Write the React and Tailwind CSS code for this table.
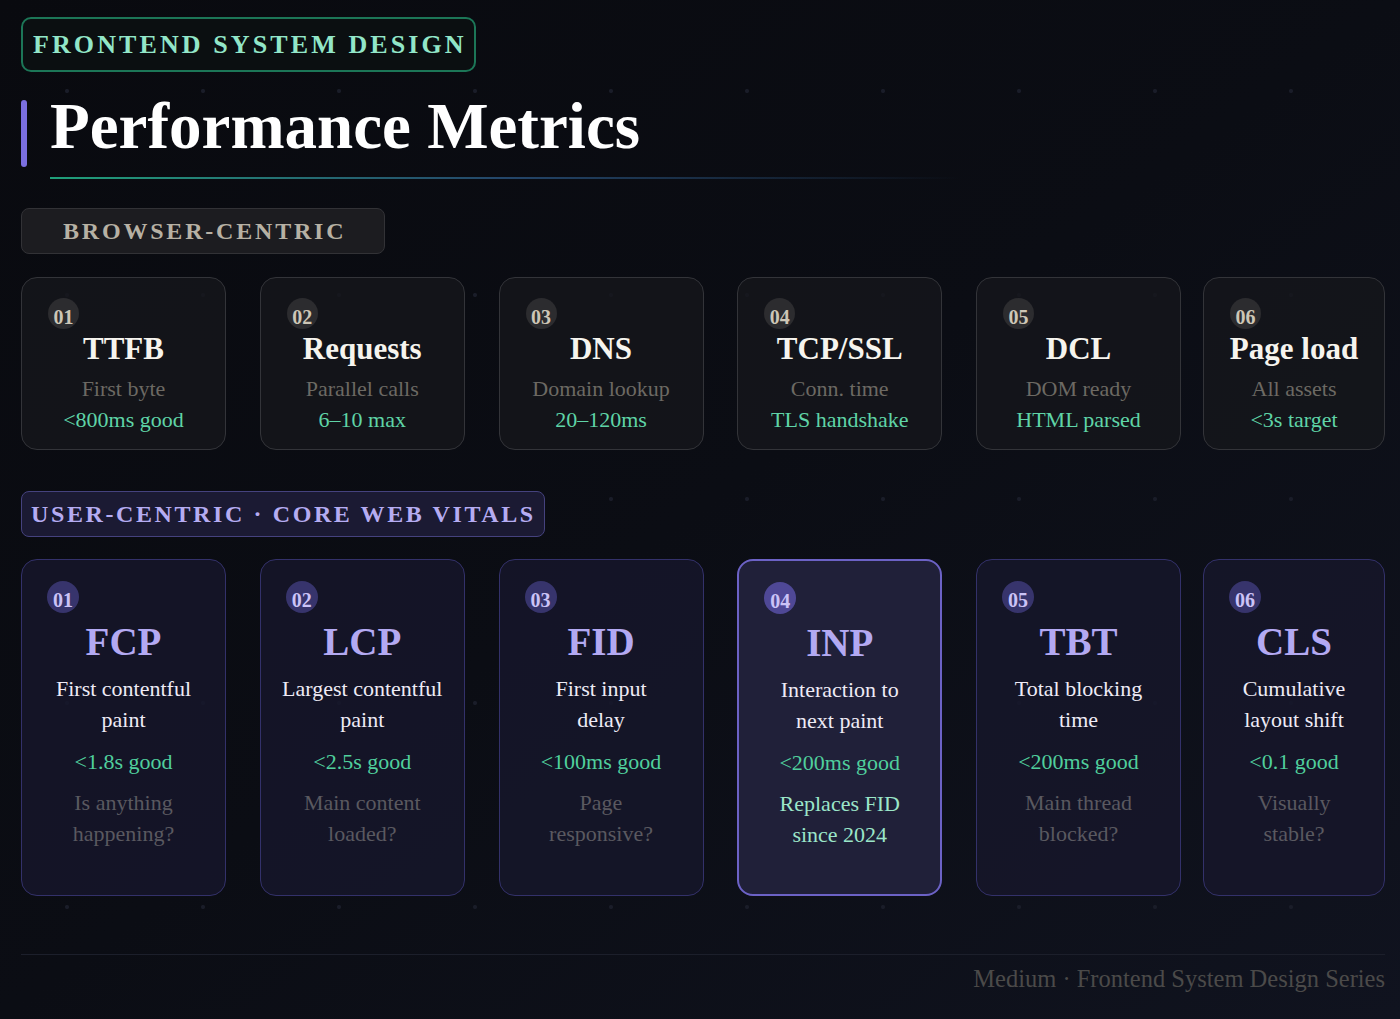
import React from "react";

const browserMetrics = [
  { n: "01", title: "TTFB", sub: "First byte", value: "<800ms good" },
  { n: "02", title: "Requests", sub: "Parallel calls", value: "6–10 max" },
  { n: "03", title: "DNS", sub: "Domain lookup", value: "20–120ms" },
  { n: "04", title: "TCP/SSL", sub: "Conn. time", value: "TLS handshake" },
  { n: "05", title: "DCL", sub: "DOM ready", value: "HTML parsed" },
  { n: "06", title: "Page load", sub: "All assets", value: "<3s target" },
];

const vitals = [
  { n: "01", title: "FCP", desc: ["First contentful", "paint"], value: "<1.8s good", note: ["Is anything", "happening?"] },
  { n: "02", title: "LCP", desc: ["Largest contentful", "paint"], value: "<2.5s good", note: ["Main content", "loaded?"] },
  { n: "03", title: "FID", desc: ["First input", "delay"], value: "<100ms good", note: ["Page", "responsive?"] },
  { n: "04", title: "INP", desc: ["Interaction to", "next paint"], value: "<200ms good", note: ["Replaces FID", "since 2024"], active: true },
  { n: "05", title: "TBT", desc: ["Total blocking", "time"], value: "<200ms good", note: ["Main thread", "blocked?"] },
  { n: "06", title: "CLS", desc: ["Cumulative", "layout shift"], value: "<0.1 good", note: ["Visually", "stable?"] },
];

function BrowserCard({ m, last }) {
  return (
    <div
      className={`h-[173px] shrink-0 rounded-[16px] border border-[#333439] bg-[#15161b]/80 pt-[20px] ${
        last ? "w-[182px] -ml-[11.75px]" : "w-[205px]"
      }`}
    >
      <div className="ml-[26px] flex h-[31px] w-[31px] items-center justify-center rounded-full bg-[#2c2c2f] pt-[6px] text-[20px] font-bold leading-none text-[#cdc6b6]">
        {m.n}
      </div>
      <div className="text-center">
        <div className="mt-[2px] text-[31px] font-bold leading-[36px] text-[#f6f4ee]">{m.title}</div>
        <div className="mt-[6px] text-[22px] leading-[31px] text-[#6c6963]">{m.sub}</div>
        <div className="text-[22px] leading-[31px] text-[#5fd4a7]">{m.value}</div>
      </div>
    </div>
  );
}

function VitalCard({ m, last }) {
  const active = m.active;
  return (
    <div
      className={`h-[337px] shrink-0 rounded-[16px] pt-[21px] ${
        last ? "w-[182px] -ml-[11.75px]" : "w-[205px]"
      } ${
        active
          ? "border-2 border-[#6c62c6] bg-[#202039]"
          : "border border-[#33316a] bg-[#16162a]/85"
      }`}
    >
      <div
        className={`ml-[25px] flex h-[32px] w-[32px] items-center justify-center rounded-full pt-[6px] text-[20px] font-bold leading-none text-[#cbc3f7] ${
          active ? "bg-[#4f4896]" : "bg-[#37346c]"
        }`}
      >
        {m.n}
      </div>
      <div className="text-center">
        <div className="mt-[6px] text-[39px] font-bold leading-[46px] text-[#b3a9f2]">{m.title}</div>
        <div className="mt-[8px] text-[22px] leading-[31px] text-[#eeebf6]">
          {m.desc[0]}
          <br />
          {m.desc[1]}
        </div>
        <div className="mt-[11px] text-[22px] leading-[31px] text-[#50cf9d]">{m.value}</div>
        <div className={`mt-[10px] text-[22px] leading-[31px] ${active ? "text-[#9be6c9]" : "text-[#5a5960]"}`}>
          {m.note[0]}
          <br />
          {m.note[1]}
        </div>
      </div>
    </div>
  );
}

export default function App() {
  return (
    <div className="min-h-screen w-full bg-gradient-to-br from-[#090a0f] via-[#0b0d14] to-[#10131f] font-['Liberation_Serif',serif]">
      <div className="min-h-[1019px] bg-[radial-gradient(circle,#1a1d29_1.5px,transparent_2.5px)] bg-[size:136px_204px] bg-[position:-1px_-11px] px-[21px] pt-[17px]">
        {/* HEADER BADGE */}
        <div className="inline-flex h-[55px] items-center rounded-[10px] border-2 border-[#1c7657] bg-[#0b0f11] pl-[10px] pr-[7px]">
          <span className="text-[26px] font-bold tracking-[3.1px] text-[#92e6c8]">FRONTEND SYSTEM DESIGN</span>
        </div>

        {/* TITLE */}
        <div className="mt-[28px] flex items-start">
          <div className="h-[67px] w-[6px] rounded-full bg-[#7b6fe0]" />
          <h1 className="ml-[23px] text-[65px] font-bold leading-[52px] text-white">Performance Metrics</h1>
        </div>
        <div className="ml-[29px] mt-[10px] h-[2px] w-[910px] bg-gradient-to-r from-[#1fa07a] via-[#24466a] to-transparent" />

        {/* BROWSER-CENTRIC */}
        <div className="mt-[29px] inline-flex h-[46px] items-center rounded-[8px] border border-[#323236] bg-[#1c1c20] pl-[41px] pr-[38px]">
          <span className="text-[24px] font-bold tracking-[2.8px] text-[#b7b1a4]">BROWSER-CENTRIC</span>
        </div>

        <div className="mt-[23px] flex gap-[33.75px]">
          {browserMetrics.map((m, i) => (
            <BrowserCard key={m.n} m={m} last={i === browserMetrics.length - 1} />
          ))}
        </div>

        {/* USER-CENTRIC */}
        <div className="mt-[41px] inline-flex h-[46px] items-center rounded-[8px] border border-[#45427e] bg-[#1b1a33] pl-[9px] pr-[8px]">
          <span className="text-[24px] font-bold tracking-[2.6px] text-[#b5acf2]">USER-CENTRIC · CORE WEB VITALS</span>
        </div>

        <div className="mt-[22px] flex gap-[33.75px]">
          {vitals.map((m, i) => (
            <VitalCard key={m.n} m={m} last={i === vitals.length - 1} />
          ))}
        </div>

        {/* FOOTER */}
        <div className="mt-[58px] w-[1364px] border-t border-[#1c1f2b] pt-[8px] text-right text-[24.5px] leading-[31px] text-[#4b4a49]">
          Medium · Frontend System Design Series
        </div>
      </div>
    </div>
  );
}
